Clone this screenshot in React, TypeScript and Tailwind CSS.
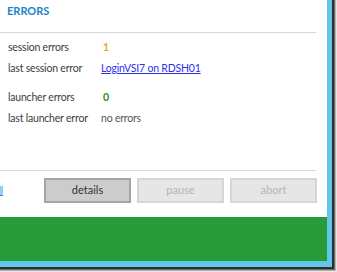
export default function App() {
  return (
    <div className="w-[337px] h-[272px] bg-white flex" style={{ fontFamily: "Lato, 'Noto Sans', sans-serif" }}>
      {/* window shadow layers */}
      <div className="w-[337px] h-[272px] border-r border-b border-[#e6e6e6] flex">
        <div className="flex-1 border-r border-b border-[#b4b4b4] flex">
          <div className="flex-1 border-r border-b border-[#6a6a6a] flex">
            <div className="flex-1 border-r-2 border-b-2 border-[#2e2e2e] flex">
              <div className="flex-1 border-r-[5px] border-b-[6px] border-[#62c6e8] flex flex-col">
                <div className="flex-1 bg-white flex flex-col text-[10.5px] tracking-[-0.2px] text-[#3c3c3c]">
                  <div className="h-[32px] pl-[7px] pt-[4px] text-[11px] tracking-normal font-bold text-[#1c84c4] leading-[14px]">
                    ERRORS
                  </div>
                  <div className="h-px bg-[#d6d6d6] mr-[11px]" />
                  <div className="pt-[4px] pl-[8px]">
                    <div className="flex h-[21px] items-center">
                      <span className="w-[93px]">session errors</span>
                      <span className="text-[#f2a124] font-bold pl-[2px]">1</span>
                    </div>
                    <div className="flex h-[21px] items-center">
                      <span className="w-[93px]">last session error</span>
                      <span className="text-[#3030ee] underline">LoginVSI7 on RDSH01</span>
                    </div>
                    <div className="flex h-[21px] items-center mt-[8px]">
                      <span className="w-[93px]">launcher errors</span>
                      <span className="text-[#2f8a23] font-bold pl-[2px]">0</span>
                    </div>
                    <div className="flex h-[21px] items-center">
                      <span className="w-[93px]">last launcher error</span>
                      <span className="text-[#555]">no errors</span>
                    </div>
                  </div>
                  <div className="h-px bg-[#d6d6d6] mr-[11px] mt-[41px]" />
                  <div className="flex items-center mt-[7px] pr-[10px]">
                    <div className="w-[3px] h-[10px] flex flex-col">
                      <div className="flex-1 bg-[#8fd0f6]" />
                      <div className="h-[1px] bg-[#7a5cf0]" />
                    </div>
                    <div className="flex-1" />
                    <div className="flex gap-[6px] text-[11px] tracking-normal">
                      <div className="w-[87px] h-[25px] bg-[#cccccc] border-2 border-[#a6a6a6] flex items-center justify-center text-[#333]">
                        details
                      </div>
                      <div className="w-[87px] h-[25px] bg-[#e6e6e6] border-2 border-[#d6d6d6] flex items-center justify-center text-[#b4b4b4]">
                        pause
                      </div>
                      <div className="w-[87px] h-[25px] bg-[#e6e6e6] border-2 border-[#d6d6d6] flex items-center justify-center text-[#b4b4b4]">
                        abort
                      </div>
                    </div>
                  </div>
                  <div className="flex-1" />
                  <div className="h-[44px] bg-[#289a3a]" />
                </div>
              </div>
            </div>
          </div>
        </div>
      </div>
    </div>
  );
}
